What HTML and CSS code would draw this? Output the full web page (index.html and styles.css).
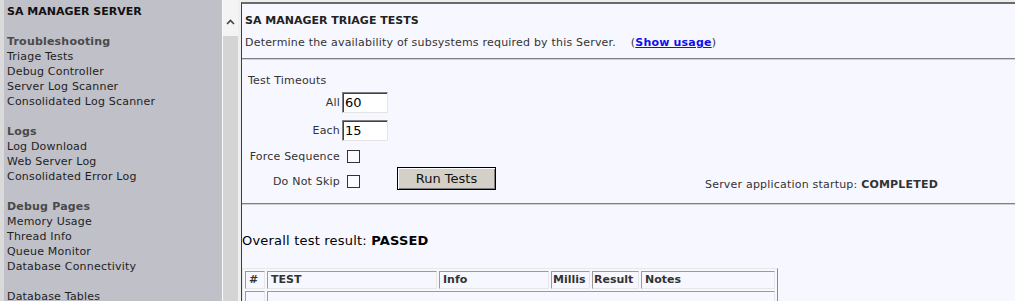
FILE: index.html
```html
<!DOCTYPE html>
<html>
<head>
<meta charset="utf-8">
<title>SA Manager Triage Tests</title>
<link rel="stylesheet" href="styles.css">
</head>
<body>
<div class="frame">
  <nav class="sidebar">
    <div class="brand">SA MANAGER SERVER</div>
    <div class="group">
      <div class="group-title">Troubleshooting</div>
      <a class="nav-link" href="#">Triage Tests</a>
      <a class="nav-link" href="#">Debug Controller</a>
      <a class="nav-link" href="#">Server Log Scanner</a>
      <a class="nav-link" href="#">Consolidated Log Scanner</a>
    </div>
    <div class="group">
      <div class="group-title">Logs</div>
      <a class="nav-link" href="#">Log Download</a>
      <a class="nav-link" href="#">Web Server Log</a>
      <a class="nav-link" href="#">Consolidated Error Log</a>
    </div>
    <div class="group">
      <div class="group-title">Debug Pages</div>
      <a class="nav-link" href="#">Memory Usage</a>
      <a class="nav-link" href="#">Thread Info</a>
      <a class="nav-link" href="#">Queue Monitor</a>
      <a class="nav-link" href="#">Database Connectivity</a>
    </div>
    <div class="group">
      <a class="nav-link" href="#">Database Tables</a>
    </div>
  </nav>
  <div class="vscroll">
    <div class="vscroll-btn">
      <svg width="9" height="6" viewBox="0 0 9 6"><path d="M1 5 L4.5 1.5 L8 5" fill="none" stroke="#444" stroke-width="1.6"/></svg>
    </div>
    <div class="vscroll-thumb"></div>
  </div>
  <main class="main">
    <section class="head">
      <div class="page-title">SA MANAGER TRIAGE TESTS</div>
      <div class="page-desc">Determine the availability of subsystems required by this Server. &nbsp;&nbsp;&nbsp;(<a class="usage-link" href="#">Show usage</a>)</div>
    </section>
    <section class="form">
      <div class="fields">
        <div class="f-title">Test Timeouts</div>
        <label class="f-label r2">All</label>
        <input class="num r2c" type="text" value="60">
        <label class="f-label r3">Each</label>
        <input class="num r3c" type="text" value="15">
        <label class="f-label r4">Force Sequence</label>
        <input class="chk r4c" type="checkbox">
        <label class="f-label r5">Do Not Skip</label>
        <input class="chk r5c" type="checkbox">
        <button class="run" type="button">Run Tests</button>
        <div class="status">Server application startup: <b>COMPLETED</b></div>
      </div>
    </section>
    <section class="results">
      <div class="overall">Overall test result: <b>PASSED</b></div>
      <table class="tests">
        <tr>
          <th class="c-num">#</th>
          <th class="c-test">TEST</th>
          <th class="c-info">Info</th>
          <th class="c-millis">Millis</th>
          <th class="c-result">Result</th>
          <th class="c-notes">Notes</th>
        </tr>
        <tr>
          <td class="row-cell"></td>
          <td class="row-cell" colspan="5"></td>
        </tr>
      </table>
    </section>
  </main>
</div>
</body>
</html>
```

FILE: styles.css
```css
html, body {
  margin: 0;
  padding: 0;
  height: 301px;
  overflow: hidden;
  background: #ececec;
}

body {
  font-family: "DejaVu Sans", Verdana, sans-serif;
  font-size: 11px;
  line-height: 15px;
  letter-spacing: 0.2px;
  color: #222;
}

.frame {
  display: flex;
  height: 301px;
}

/* ---------- sidebar ---------- */
.sidebar {
  width: 215px;
  flex: none;
  border-left: 4px solid #dadada;
  background: #c0c0c8;
  padding: 4px 0 0 3px;
}

.brand {
  font-weight: bold;
  color: #111;
  letter-spacing: 0;
}

.group {
  margin-top: 15px;
  display: flex;
  flex-direction: column;
}

.group-title {
  font-weight: bold;
  color: #4a4a4a;
}

.nav-link {
  color: #1e1e1e;
  text-decoration: none;
}

/* ---------- scroll strip ---------- */
.vscroll {
  width: 15px;
  flex: none;
  border-left: 1px solid #fafafa;
  border-right: 3px solid #efefef;
  display: flex;
  flex-direction: column;
}

.vscroll-btn {
  height: 36px;
  background: #f4f4f4;
  display: flex;
  justify-content: center;
  padding-top: 19px;
  box-sizing: border-box;
}

.vscroll-thumb {
  flex: 1;
  background: #d4d4d4;
}

/* ---------- main ---------- */
.main {
  flex: 1;
  margin-top: 2px;
  border-top: 2px solid #6a6a6a;
  border-left: 1px solid #3c3c3c;
  background: #f7f7ff;
  min-width: 0;
}

.head {
  padding: 9px 3px 8px;
  border-bottom: 1px solid #808080;
  box-shadow: 0 1px 0 #d0d0d0;
}

.page-title {
  font-weight: bold;
  color: #222;
  letter-spacing: 0;
}

.page-desc {
  margin-top: 7px;
  color: #333;
  white-space: nowrap;
}

.usage-link {
  color: #1010ee;
  font-weight: bold;
  text-decoration: underline;
}

.form {
  padding: 12px 0 10px 6px;
  border-bottom: 1px solid #808080;
  box-shadow: 0 1px 0 #d0d0d0;
}

.fields {
  display: grid;
  grid-template-columns: 92px 46px 106px 1fr;
  grid-template-rows: 18px 27px 28px 25px 24px;
  column-gap: 2px;
  align-items: center;
  color: #333;
}

.f-title {
  grid-column: 1 / 3;
  grid-row: 1;
}

.f-label {
  grid-column: 1;
  text-align: right;
  white-space: nowrap;
}

.r2, .r2c { grid-row: 2; }
.r3, .r3c { grid-row: 3; }
.r4, .r4c { grid-row: 4; }
.r5, .r5c { grid-row: 5; }

.num {
  grid-column: 2;
  width: 46px;
  height: 21px;
  box-sizing: border-box;
  margin: 0;
  padding: 0 0 0 2px;
  font-family: "DejaVu Sans", Verdana, sans-serif;
  font-size: 13px;
  color: #000;
  background: #fff;
  border-style: solid;
  border-width: 1px;
  border-color: #808080 #e4e4e4 #e4e4e4 #808080;
  box-shadow: inset 1px 1px 0 #404040;
  outline: none;
}

.chk {
  grid-column: 2;
  appearance: none;
  -webkit-appearance: none;
  width: 13px;
  height: 13px;
  margin: 0 0 0 5px;
  border: 1px solid #333;
  background: #fbfbff;
}

.run {
  grid-column: 3;
  grid-row: 4 / 6;
  align-self: end;
  margin: 0 0 3px 7px;
  width: 99px;
  height: 23px;
  box-sizing: border-box;
  font-family: "DejaVu Sans", Verdana, sans-serif;
  font-size: 13px;
  color: #111;
  background: #d4d0c8;
  border: 1px solid #000;
  box-shadow: inset 1px 1px 0 #fff, inset -1px -1px 0 #808080;
  padding: 0;
}

.status {
  grid-column: 4;
  grid-row: 5;
  align-self: end;
  margin: 0 0 1px 207px;
  white-space: nowrap;
  color: #333;
}

.results {
  padding-top: 29px;
}

.overall {
  font-size: 13px;
  line-height: 16px;
  color: #000;
}

.tests {
  margin-top: 19px;
  width: 535px;
  table-layout: fixed;
  border-collapse: separate;
  border-spacing: 2px;
  border-style: solid;
  border-width: 1px;
  border-color: #e8e8e8 #888 #888 #e8e8e8;
  letter-spacing: 0;
}

.tests th,
.tests td {
  box-sizing: border-box;
  border-style: solid;
  border-width: 1px;
  border-color: #9a9a9a #e6e6e6 #e6e6e6 #9a9a9a;
  padding: 0 3px;
  text-align: left;
  font-weight: bold;
  color: #333;
  height: 18px;
  line-height: 14px;
}

.c-num { width: 20px; }
.c-test { width: 170px; }
.c-info { width: 110px; }
.c-millis { width: 39px; padding: 0 1px !important; }
.c-result { width: 47px; padding: 0 1px !important; }
.c-notes { width: 134px; }

.tests td.row-cell {
  height: 20px;
}
```
